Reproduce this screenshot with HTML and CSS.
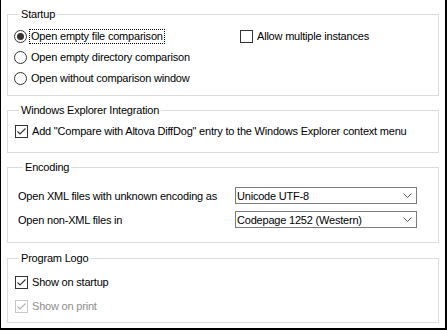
FILE: index.html
```html
<!DOCTYPE html>
<html lang="en">
<head>
    <meta charset="UTF-8">
    <title>Options</title>
    <link rel="stylesheet" href="styles.css">
</head>
<body>
    <div class="dialog">
        <fieldset class="group startup">
            <legend>Startup</legend>
            <div class="startup-cols">
                <div class="opt-list">
                    <label class="opt"><span class="radio checked"></span><span class="focus">Open empty file comparison</span></label>
                    <label class="opt"><span class="radio"></span><span class="txt">Open empty directory comparison</span></label>
                    <label class="opt"><span class="radio"></span><span class="txt">Open without comparison window</span></label>
                </div>
                <label class="opt multi"><span class="check"></span><span class="txt">Allow multiple instances</span></label>
            </div>
        </fieldset>

        <fieldset class="group explorer">
            <legend>Windows Explorer Integration</legend>
            <label class="opt"><span class="check on"><svg viewBox="0 0 11 11"><polyline points="1.5,5.5 4,8 9.5,2.5"/></svg></span><span class="txt">Add "Compare with Altova DiffDog" entry to the Windows Explorer context menu</span></label>
        </fieldset>

        <fieldset class="group encoding">
            <legend>Encoding</legend>
            <div class="enc-row">
                <span class="enc-label">Open XML files with unknown encoding as</span>
                <div class="combo"><span>Unicode UTF-8</span><svg viewBox="0 0 9 5"><polyline points="0.5,0.5 4.5,4.5 8.5,0.5"/></svg></div>
            </div>
            <div class="enc-row">
                <span class="enc-label">Open non-XML files in</span>
                <div class="combo"><span>Codepage 1252 (Western)</span><svg viewBox="0 0 9 5"><polyline points="0.5,0.5 4.5,4.5 8.5,0.5"/></svg></div>
            </div>
        </fieldset>

        <fieldset class="group logo">
            <legend>Program Logo</legend>
            <label class="opt"><span class="check on"><svg viewBox="0 0 11 11"><polyline points="1.5,5.5 4,8 9.5,2.5"/></svg></span><span class="txt">Show on startup</span></label>
            <label class="opt disabled"><span class="check on"><svg viewBox="0 0 11 11"><polyline points="1.5,5.5 4,8 9.5,2.5"/></svg></span><span class="txt">Show on print</span></label>
        </fieldset>
    </div>
</body>
</html>
```

FILE: styles.css
```css
body {
    margin: 0;
    background: #fff;
    font-family: "Liberation Sans", Arial, sans-serif;
    font-size: 11px;
    letter-spacing: -0.2px;
    color: #000;
}

.dialog {
    width: 447px;
    height: 330px;
    box-sizing: border-box;
    border-left: 1px solid #000;
    border-right: 2px solid #000;
    border-bottom: 2px solid #000;
    padding: 7px 6px 5px 6px;
}

.group {
    margin: 0;
    border: 1px solid #dcdcdc;
    padding: 0 6px;
    min-width: 0;
}

.group legend {
    margin-left: 5px;
    padding: 0 2px;
    height: 15px;
    line-height: 15px;
}

.startup {
    padding-top: 4px;
    padding-bottom: 7px;
}

.startup-cols {
    display: flex;
}

.opt-list {
    display: flex;
    flex-direction: column;
    gap: 1px;
    width: 226px;
}

.opt {
    display: flex;
    align-items: center;
    height: 20px;
}

.multi {
    align-self: flex-start;
}

.radio {
    width: 13px;
    height: 13px;
    box-sizing: border-box;
    border: 1px solid #333;
    border-radius: 50%;
    display: flex;
    align-items: center;
    justify-content: center;
    margin-right: 4px;
    flex: none;
}

.radio.checked::after {
    content: "";
    width: 7px;
    height: 7px;
    border-radius: 50%;
    background: #333;
}

.check {
    width: 13px;
    height: 13px;
    box-sizing: border-box;
    border: 1px solid #333;
    margin-right: 4px;
    flex: none;
    display: flex;
}

.check svg {
    width: 11px;
    height: 11px;
    fill: none;
    stroke: #333;
    stroke-width: 1.1;
}

.focus {
    outline: 1px dotted #000;
    outline-offset: 0;
    padding: 0 1px;
    margin-left: -1px;
    line-height: 13px;
}

.explorer {
    margin-top: 7px;
    padding-top: 3px;
    padding-bottom: 11px;
}

.explorer .opt, .logo .opt {
    margin-left: 1px;
}

.encoding {
    margin-top: 7px;
    padding: 12px 6px 14px 10px;
    display: flex;
    flex-direction: column;
    gap: 7px;
}

.enc-row {
    display: flex;
    align-items: center;
    height: 17px;
}

.enc-label {
    width: 217px;
}

.combo {
    width: 182px;
    height: 17px;
    box-sizing: border-box;
    border: 1px solid #7a7a7a;
    display: flex;
    align-items: center;
    justify-content: space-between;
    padding: 0 4px 0 1px;
}

.combo svg {
    width: 9px;
    height: 5px;
    fill: none;
    stroke: #555;
    stroke-width: 1;
}

.logo {
    margin-top: 8px;
    padding-top: 6px;
    padding-bottom: 6px;
    display: flex;
    flex-direction: column;
    gap: 4px;
}

.disabled {
    color: #8d8d8d;
}

.disabled .check {
    border-color: #c8c8c8;
}

.disabled .check svg {
    stroke: #b0b0b0;
}
```
